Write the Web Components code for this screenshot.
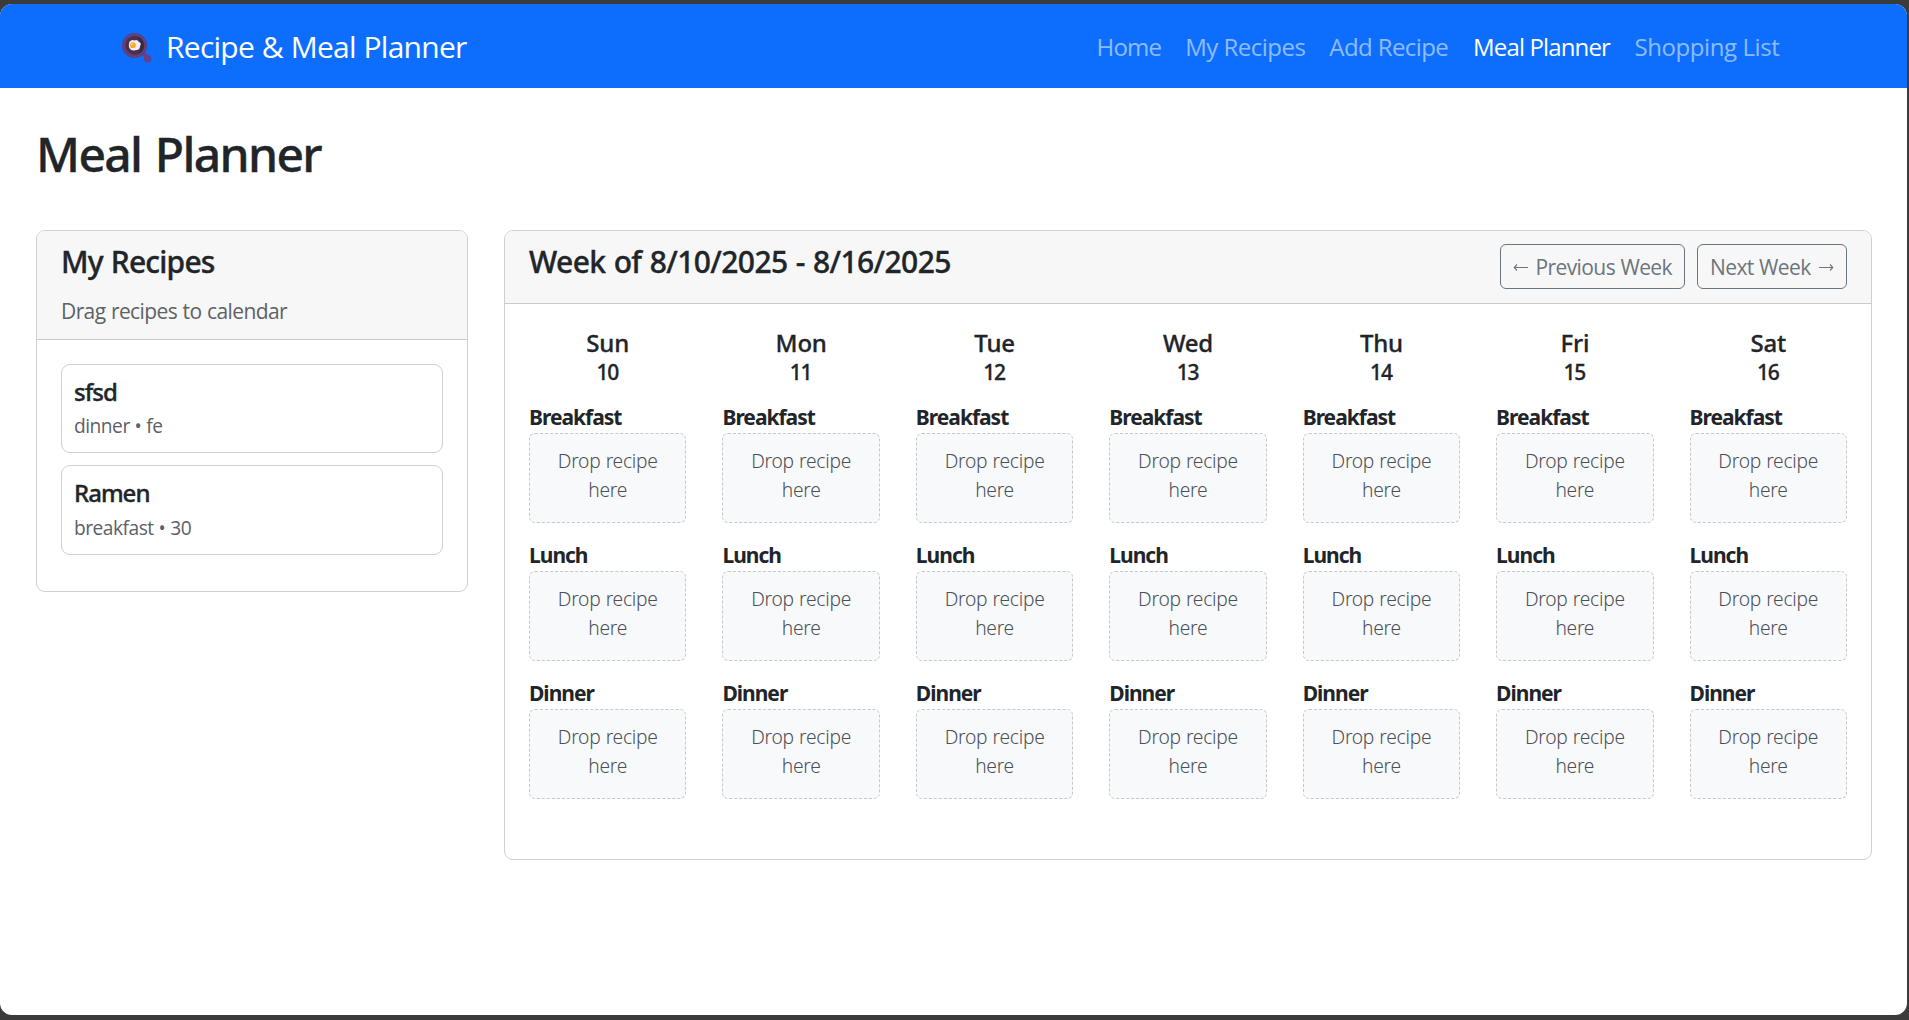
<!DOCTYPE html>
<html lang="en">
<head>
<meta charset="utf-8">
<title>Meal Planner</title>
<style>
html,body{margin:0;height:100%}
body{background:#3b3b3b;overflow:hidden;color:#212529;font-family:"Open Sans","Noto Sans",sans-serif;font-size:24px;line-height:1.5}
</style>
</head>
<body>
<meal-app></meal-app>
<script>
class Base extends HTMLElement {
  connectedCallback() {
    this.attachShadow({ mode: 'open' }).innerHTML =
      '<style>*{box-sizing:border-box}:host{box-sizing:border-box;display:block}' + this.css() + '</style>' + this.html();
  }
}

customElements.define('pan-icon', class extends Base {
  css() { return ':host{width:30px;height:30px}svg{display:block}'; }
  html() {
    return `<svg width="30" height="30" viewBox="0 0 30 30">
      <path d="M20.5 19.5 L24.5 23.5" stroke="#6a3f86" stroke-width="4.4" stroke-linecap="round"/>
      <circle cx="25.7" cy="25.7" r="2.5" fill="#2a55b5" stroke="#6a3f86" stroke-width="2.6"/>
      <circle cx="12.5" cy="12.5" r="12.5" fill="#5c3b76"/>
      <circle cx="12.5" cy="12.5" r="11" fill="none" stroke="#6f4a86" stroke-width=".8"/>
      <circle cx="12.9" cy="12.3" r="9.3" fill="#49304f"/>
      <path d="M16 4 A9.3 9.3 0 0 1 17 20.6 Q21 12 16 4Z" fill="#372a3f"/>
      <path d="M7.5 8.7 Q9.5 6.4 12.5 7.4 Q15.5 6.4 17 9 Q20 10.5 18 13 Q18 17 14.5 17 Q11 18.2 8.3 16.2 Q5.8 13.6 7.5 8.7Z" fill="#f6edf8"/>
      <circle cx="10.9" cy="12.2" r="2.9" fill="#f7a928"/>
      <circle cx="10.2" cy="11.3" r="1.2" fill="#ffc94d"/>
    </svg>`;
  }
});

customElements.define('nav-link', class extends Base {
  css() { return `:host{color:rgba(255,255,255,.55);white-space:nowrap;width:${this.getAttribute('w')}px;letter-spacing:${this.getAttribute('ls')}px}:host([active]){color:#fff}`; }
  html() { return '<slot></slot>'; }
});

customElements.define('nav-bar', class extends Base {
  css() { return `:host{display:flex;align-items:center;justify-content:space-between;height:84px;background:#0d6efd;padding:0 125.6px 0 122px}
    .brand{display:flex;align-items:center;gap:14px;color:#fff;font-size:30px;line-height:45px;letter-spacing:-.74px;word-spacing:.7px;white-space:nowrap}
    pan-icon{margin-top:3px}
    nav{display:flex;padding-top:1px}`; }
  html() { return `<div class="brand"><pan-icon></pan-icon><span>Recipe &amp; Meal Planner</span></div>
    <nav><nav-link w="88.7" ls="-.75">Home</nav-link><nav-link w="144.2" ls="-.5">My Recipes</nav-link><nav-link w="143.8" ls="-.6">Add Recipe</nav-link><nav-link active w="161.3" ls="-.86">Meal Planner</nav-link><nav-link w="147" ls="-.41">Shopping List</nav-link></nav>`; }
});

customElements.define('panel-card', class extends Base {
  css() { return `:host{border:1px solid #cfd0d1;border-radius:9px;background:#fff;overflow:hidden}
    header{background:#f7f7f7;border-bottom:1px solid #c9cacb;padding:12px 24px}
    .body{padding:24px}`; }
  html() { return '<header><slot name="header"></slot></header><div class="body"><slot></slot></div>'; }
});

customElements.define('recipe-item', class extends Base {
  css() { return `:host{height:89.3px;border:1px solid #cfd0d1;border-radius:9px;padding:12.6px 12px 0;margin-bottom:12px}
    .n{font:500 24px/28.8px "Noto Sans",sans-serif;-webkit-text-stroke:.35px;letter-spacing:-1px;margin-bottom:6px}
    .m{font-size:19.2px;line-height:28.8px;letter-spacing:-.5px;word-spacing:.4px;color:#5b6167}`; }
  html() { return `<div class="n">${this.getAttribute('name')}</div><div class="m">${this.getAttribute('meta')}</div>`; }
});

customElements.define('week-button', class extends Base {
  css() { return `:host{display:flex;align-items:center;justify-content:space-between;width:${this.getAttribute('w')}px;height:45px;padding:1px 12px 0;border:1px solid #6c757d;border-radius:6px;color:#6c757d;font-size:21px;letter-spacing:-.6px;word-spacing:.5px;white-space:nowrap}svg{display:block;flex:none}`; }
  html() {
    const d = this.getAttribute('dir');
    const a = `<svg width="15" height="9" viewBox="0 0 15 9" fill="none" stroke="currentColor" stroke-width="1.1"><path d="${d === 'prev' ? 'M15 4.5H1.2M4 1.5L1.2 4.5L4 7.5' : 'M0 4.5H13.8M11 1.5L13.8 4.5L11 7.5'}"/></svg>`;
    return d === 'prev' ? a + '<span><slot></slot></span>' : '<span><slot></slot></span>' + a;
  }
});

customElements.define('meal-slot', class extends Base {
  css() { return `:host{margin-bottom:12.4px}
    .l{height:35.6px;line-height:36px;padding-top:1px}
    .l b{font:700 21px/1 "Noto Sans",sans-serif;letter-spacing:-1px}
    .d{height:90px;border:1px dashed #c6c8ca;border-radius:6px;background:#f8f9fa;padding:12.9px 12px 0;text-align:center;font:300 19.2px/28.8px "Noto Sans",sans-serif;letter-spacing:-.25px;word-spacing:.5px;color:#4a5056}`; }
  html() { return `<div class="l"><b>${this.getAttribute('meal')}</b></div><div class="d">Drop recipe<br>here</div>`; }
});

customElements.define('day-column', class extends Base {
  css() { return `:host{flex:1 1 0;min-width:0;margin-bottom:23px}
    .h{font:500 24px/28.8px "Noto Sans",sans-serif;-webkit-text-stroke:.3px;text-align:center;padding-top:.7px;margin-bottom:11px;letter-spacing:-.2px}
    small{font-size:21px;line-height:1;letter-spacing:-1.2px;padding-right:1px}`; }
  html() { return `<div class="h">${this.getAttribute('day')}<br><small>${this.getAttribute('date')}</small></div>` +
    ['Breakfast', 'Lunch', 'Dinner'].map(m => `<meal-slot meal="${m}"></meal-slot>`).join(''); }
});

customElements.define('meal-app', class extends Base {
  css() { return `:host{height:1011px;width:1907px;margin-top:4px;background:#fff;border-radius:12px;overflow:hidden}
    main{padding:37px 36px 0}
    h1,h5{font-family:"Noto Sans",sans-serif;font-weight:500;-webkit-text-stroke:.35px;margin:0}
    h1{font-size:48px;line-height:57.6px;letter-spacing:-1.65px;word-spacing:2.5px;margin-bottom:47.4px}
    h5{font-size:30px;line-height:36px;letter-spacing:-.8px;word-spacing:1px;padding-top:1px;margin-bottom:11px}
    .week h5{letter-spacing:-.6px;word-spacing:1px}
    .cols{display:flex;gap:36px;align-items:flex-start}
    .side{width:432px;flex:none;height:362px}.week{width:1368px;flex:none;height:630px}
    .hint{height:36px;padding-top:1px}.hint small{font-size:21px;letter-spacing:-.6px;word-spacing:.6px;color:#5d6267}
    .head{display:flex;justify-content:space-between;align-items:center}
    .btns{display:flex;gap:12px}
    .days{display:flex;gap:36px}`; }
  html() {
    const days = ['Sun', 'Mon', 'Tue', 'Wed', 'Thu', 'Fri', 'Sat'];
    return `<nav-bar></nav-bar><main><h1>Meal Planner</h1><div class="cols">
      <panel-card class="side"><div slot="header"><h5>My Recipes</h5><div class="hint"><small>Drag recipes to calendar</small></div></div>
        <recipe-item name="sfsd" meta="dinner • fe"></recipe-item><recipe-item name="Ramen" meta="breakfast • 30"></recipe-item></panel-card>
      <panel-card class="week"><div slot="header" class="head"><h5>Week of 8/10/2025 - 8/16/2025</h5>
        <div class="btns"><week-button dir="prev" w="185">Previous Week</week-button><week-button dir="next" w="150">Next Week</week-button></div></div>
        <div class="days">${days.map((d, i) => `<day-column day="${d}" date="${10 + i}"></day-column>`).join('')}</div></panel-card>
    </div></main>`;
  }
});
</script>
</body>
</html>
